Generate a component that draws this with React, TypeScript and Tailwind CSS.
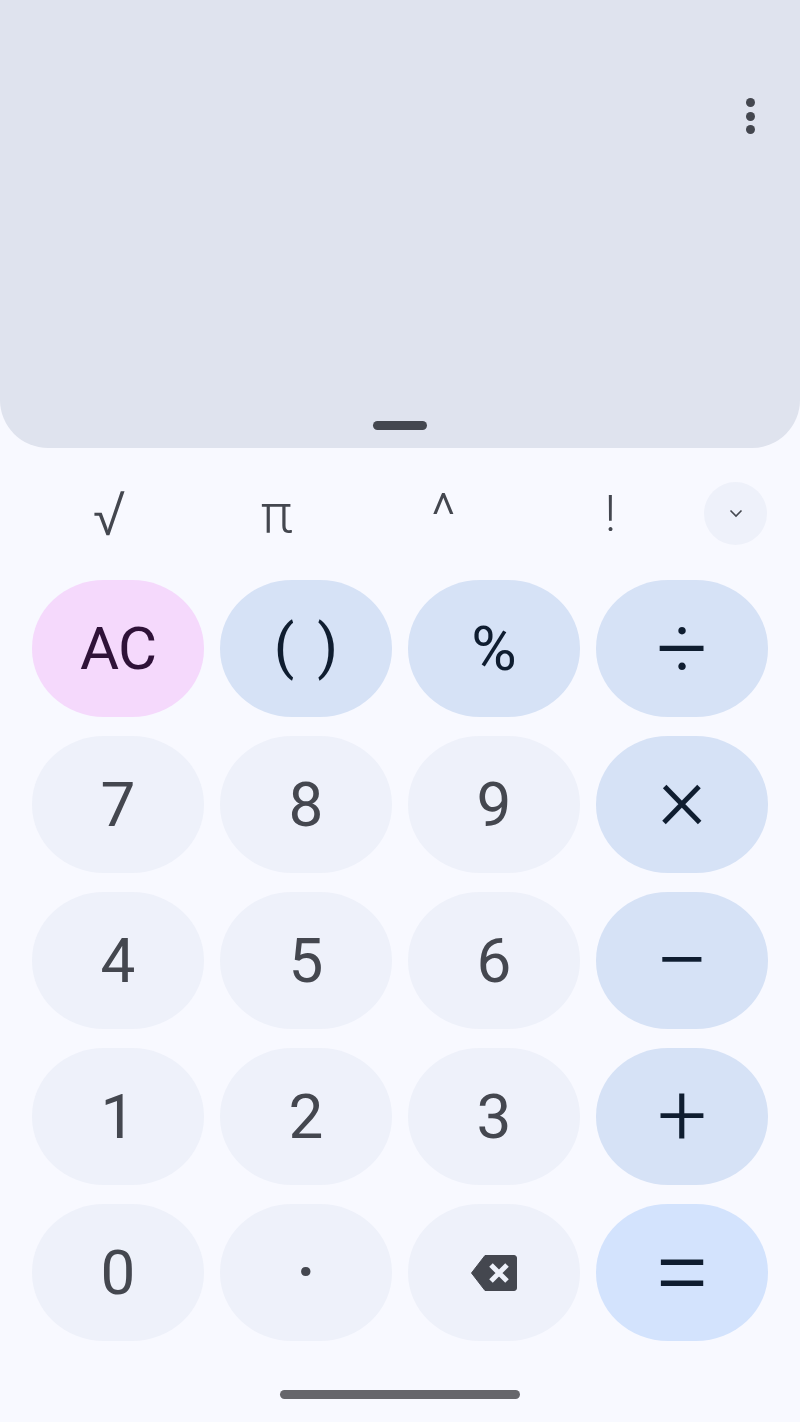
const sciKeys = [
  { label: "√", className: "text-[62px] font-light" },
  { label: "π", className: "text-[54px] font-light" },
  { label: "^", className: "mt-[3px] text-[60px] font-light" },
  { label: "!", className: "text-[50px] font-light" },
];

const padClass = "bg-[#eef1fa] text-[#44474f] text-[62px]";
const opClass = "bg-[#d6e2f6] text-[#0f1d30]";

const keys = [
  { label: "AC", className: "bg-[#f5d9fc] text-[#2f1238] text-[60px] tracking-[-1px]" },
  { label: "( )", className: `${opClass} pb-[4px] text-[60px] font-normal [word-spacing:8px]` },
  { label: "%", className: `${opClass} text-[62px]` },
  { label: "÷", className: `${opClass} text-[90px] font-light` },
  { label: "7", className: padClass },
  { label: "8", className: padClass },
  { label: "9", className: padClass },
  { label: "×", className: `${opClass} pb-[14px] text-[92px] font-light` },
  { label: "4", className: padClass },
  { label: "5", className: padClass },
  { label: "6", className: padClass },
  { label: "−", className: `${opClass} text-[96px] font-light` },
  { label: "1", className: padClass },
  { label: "2", className: padClass },
  { label: "3", className: padClass },
  { label: "+", className: `${opClass} pb-[4px] text-[88px] font-light` },
  { label: "0", className: padClass },
  { label: "·", className: "bg-[#eef1fa] text-[#44474f] text-[84px]" },
  { label: "back", className: padClass },
  { label: "=", className: "bg-[#d3e3fd] text-[#0f1d30] pb-[2px] text-[104px] font-light" },
];

const BackspaceIcon = () => (
  <svg width="48" height="38" viewBox="0 0 48 38">
    <path
      d="M15 1.5h29a2.5 2.5 0 0 1 2.5 2.5v30a2.5 2.5 0 0 1-2.5 2.5H15L1.5 19z"
      fill="#44474f"
      stroke="#44474f"
      strokeLinejoin="round"
    />
    <path d="M21 11l16 16M37 11L21 27" stroke="#eef1fa" strokeWidth="5" />
  </svg>
);

const App = () => {
  return (
    <div className="flex h-[1422px] w-[800px] flex-col overflow-hidden bg-[#f8f9ff] font-['Roboto',sans-serif]">
      {/* display */}
      <div className="relative h-[448px] rounded-b-[48px] bg-[#dfe3ee]">
        <div className="absolute right-[45px] top-[98px] flex flex-col gap-[4.5px]">
          <span className="h-[9px] w-[9px] rounded-full bg-[#44474f]" />
          <span className="h-[9px] w-[9px] rounded-full bg-[#44474f]" />
          <span className="h-[9px] w-[9px] rounded-full bg-[#44474f]" />
        </div>
        <div className="absolute bottom-[18px] left-[373px] h-[9px] w-[54px] rounded-full bg-[#44474f]" />
      </div>

      {/* scientific row */}
      <div className="mt-[34px] flex h-[63px] items-center pl-[26px]">
        {sciKeys.map((k) => (
          <div
            key={k.label}
            className={`flex w-[167px] justify-center leading-none text-[#44474f] ${k.className}`}
          >
            {k.label}
          </div>
        ))}
        <div className="ml-[10px] flex h-[63px] w-[63px] items-center justify-center rounded-full bg-[#eef1fa]">
          <svg width="14" height="9" viewBox="0 0 14 9" fill="none">
            <path d="M1.5 1.5L7 7l5.5-5.5" stroke="#44474f" strokeWidth="1.6" />
          </svg>
        </div>
      </div>

      {/* keypad */}
      <div className="mt-[35px] grid grid-cols-4 gap-x-4 gap-y-[19px] px-8">
        {keys.map((k) => (
          <div
            key={k.label}
            className={`flex h-[137px] items-center justify-center rounded-[72px/68px] leading-none ${k.className}`}
          >
            {k.label === "back" ? <BackspaceIcon /> : k.label}
          </div>
        ))}
      </div>

      <div className="mx-auto mt-[49px] h-[9px] w-[240px] rounded-full bg-[#66666b]" />
    </div>
  );
};

export default App;
